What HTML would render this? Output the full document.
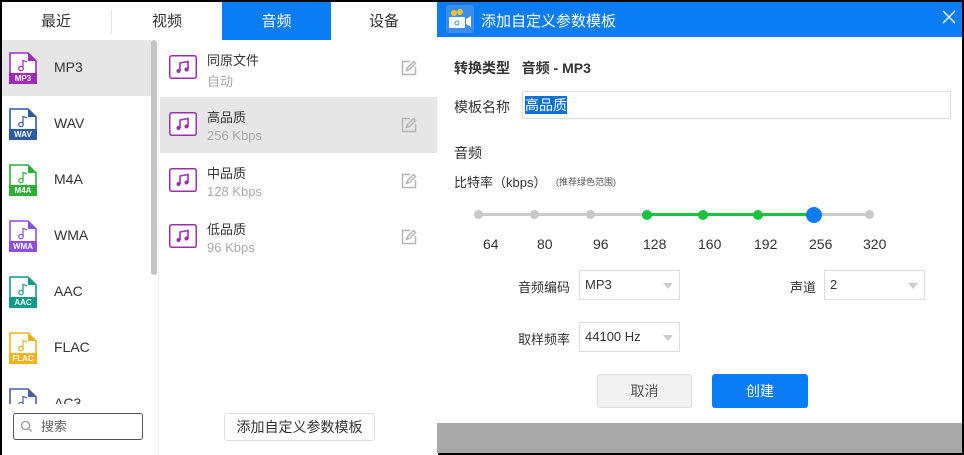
<!DOCTYPE html>
<html><head><meta charset="utf-8"><style>
*{margin:0;padding:0;box-sizing:border-box}
body{width:964px;height:455px;background:#000;position:relative;overflow:hidden;font-family:"Liberation Sans","Noto Sans CJK SC",sans-serif;color:#333}
.abs{position:absolute}
.tab{position:absolute;top:2px;height:38px;line-height:40px;text-align:center;font-size:15px;color:#333;background:#fff}
.fmt{position:absolute;left:2px;width:150px;height:56px}
.fmt .lbl{position:absolute;left:52px;top:19px;font-size:14px;color:#333}
.fmt .tg{position:absolute;left:7px;top:34px;font-size:8px;color:#fff;width:28px;text-align:center;font-weight:bold}
.fi{position:absolute;left:7px;top:12px;width:28px;height:32px}
.row{position:absolute;left:160px;width:277px;height:56px}
.row .t{position:absolute;left:47px;top:10px;font-size:13px;color:#333}
.row .s{position:absolute;left:47px;top:31px;font-size:13px;color:#aaa}
.row .n{position:absolute;left:9px;top:15px}
.row .e{position:absolute;left:241px;top:20px}
.sel{position:absolute;height:30px;border:1px solid #ddd;background:#fff;font-size:13px;line-height:28px;padding-left:5px;color:#333}
.sel:after{content:"";position:absolute;right:6px;top:12px;border:5px solid transparent;border-top:6px solid #ccc}
</style></head><body>
<div class="abs" style="left:2px;top:2px;width:436px;height:453px;background:#fff"></div>
<div class="tab" style="left:2px;width:108px">最近</div>
<div class="abs" style="left:111px;top:10px;width:1px;height:24px;background:#e5e5e5"></div>
<div class="tab" style="left:112px;width:110px">视频</div>
<div class="tab" style="left:222px;width:109px;background:#0a7cf6;color:#fff">音频</div>
<div class="tab" style="left:331px;width:106px">设备</div>

<svg width="0" height="0" style="position:absolute"><defs>
<symbol id="fi" viewBox="0 0 28 32"><path d="M1 1h18l8 8v22H1z" fill="#fff" stroke="currentColor" stroke-width="1.6"/><path d="M19 1l8 8h-8z" fill="currentColor"/><rect x="0" y="21" width="28" height="11" fill="currentColor"/><path d="M14 8v8.5" stroke="currentColor" stroke-width="1.2"/><circle cx="12" cy="16.5" r="2.2" fill="none" stroke="currentColor" stroke-width="1.2"/><path d="M14 8c1 1 3 1.5 4 2" fill="none" stroke="currentColor" stroke-width="1.2"/></symbol>
<symbol id="note" viewBox="0 0 28 24"><rect x="0.75" y="0.75" width="26.5" height="22.5" rx="2" fill="#fff" stroke="#9b2fae" stroke-width="1.5"/><path d="M11 16V8l8-1.5v8" fill="none" stroke="#9b2fae" stroke-width="1.6"/><circle cx="9.5" cy="16" r="2" fill="#9b2fae"/><circle cx="17.5" cy="14.5" r="2" fill="#9b2fae"/></symbol>
<symbol id="ed" viewBox="0 0 16 16"><path d="M9 1.5H1.5v13h13V7" fill="none" stroke="#b5b5b5" stroke-width="1.5"/><path d="M5.5 10.5l1-3 6-6 2 2-6 6z" fill="none" stroke="#b5b5b5" stroke-width="1.5"/></symbol>
</defs></svg>

<div class="fmt" style="top:40px;background:#e6e6e6"><svg class="fi" style="color:#a12bb8"><use href="#fi"/></svg><span class="tg">MP3</span><span class="lbl">MP3</span></div>
<div class="fmt" style="top:96px"><svg class="fi" style="color:#2e5aa0"><use href="#fi"/></svg><span class="tg">WAV</span><span class="lbl">WAV</span></div>
<div class="fmt" style="top:152px"><svg class="fi" style="color:#2fae3a"><use href="#fi"/></svg><span class="tg">M4A</span><span class="lbl">M4A</span></div>
<div class="fmt" style="top:208px"><svg class="fi" style="color:#8a4fe0"><use href="#fi"/></svg><span class="tg">WMA</span><span class="lbl">WMA</span></div>
<div class="fmt" style="top:264px"><svg class="fi" style="color:#12998a"><use href="#fi"/></svg><span class="tg">AAC</span><span class="lbl">AAC</span></div>
<div class="fmt" style="top:320px"><svg class="fi" style="color:#f2b21c"><use href="#fi"/></svg><span class="tg">FLAC</span><span class="lbl">FLAC</span></div>
<div class="fmt" style="top:376px;height:28px;overflow:hidden"><svg class="fi" style="color:#4a5fa8"><use href="#fi"/></svg><span class="lbl">AC3</span></div>
<div class="abs" style="left:2px;top:404px;width:156px;height:51px;background:#fff"></div>
<div class="abs" style="left:151px;top:40px;width:6px;height:235px;background:#c4c4c4;border-radius:3px"></div>
<div class="abs" style="left:158px;top:40px;width:1px;height:415px;background:#eee"></div>
<div class="abs" style="left:13px;top:413px;width:130px;height:27px;border:1px solid #555;border-radius:3px;font-size:13px;color:#666;line-height:25px;padding-left:27px">搜索</div>
<svg class="abs" style="left:20px;top:420px" width="13" height="13"><circle cx="5.5" cy="5.5" r="4" fill="none" stroke="#999" stroke-width="1.3"/><path d="M8.5 8.5l3 3" stroke="#999" stroke-width="1.3"/></svg>

<div class="row" style="top:40px"><svg class="n" width="28" height="24"><use href="#note"/></svg><span class="t">同原文件</span><span class="s">自动</span><svg class="e" width="16" height="16"><use href="#ed"/></svg></div>
<div class="row" style="top:97px;background:#e6e6e6"><svg class="n" width="28" height="24"><use href="#note"/></svg><span class="t">高品质</span><span class="s">256 Kbps</span><svg class="e" width="16" height="16"><use href="#ed"/></svg></div>
<div class="row" style="top:153px"><svg class="n" width="28" height="24"><use href="#note"/></svg><span class="t">中品质</span><span class="s">128 Kbps</span><svg class="e" width="16" height="16"><use href="#ed"/></svg></div>
<div class="row" style="top:209px"><svg class="n" width="28" height="24"><use href="#note"/></svg><span class="t">低品质</span><span class="s">96 Kbps</span><svg class="e" width="16" height="16"><use href="#ed"/></svg></div>
<div class="abs" style="left:224px;top:413px;width:151px;height:28px;border:1px solid #ddd;border-radius:3px;font-size:14px;line-height:26px;text-align:center;color:#333">添加自定义参数模板</div>

<!-- dialog -->
<div class="abs" style="left:437px;top:2px;width:525px;height:421px;background:#fff"></div>
<div class="abs" style="left:437px;top:423px;width:525px;height:30px;background:#a9a9a9"></div>
<div class="abs" style="left:437px;top:2px;width:525px;height:35px;background:#0a7cf6"></div>
<svg class="abs" style="left:446px;top:5px" width="28" height="28"><rect width="28" height="28" rx="3" fill="#3d8ee8"/><rect x="3" y="12" width="16" height="11" rx="1" fill="#fff"/><path d="M20 14l5-3v11l-5-3z" fill="#fff"/><circle cx="8" cy="8" r="3" fill="#f3c233"/><circle cx="14" cy="7" r="3" fill="#f3c233"/><circle cx="11" cy="18" r="2" fill="none" stroke="#3d8ee8"/></svg>
<span class="abs" style="left:481px;top:10px;font-size:15px;color:#fff">添加自定义参数模板</span>
<svg class="abs" style="left:942px;top:10px" width="14" height="14"><path d="M1 1l12 12M13 1L1 13" stroke="#fff" stroke-width="1.3"/></svg>

<span class="abs" style="left:454px;top:58px;font-size:14px;font-weight:bold;color:#333">转换类型&nbsp;&nbsp;&nbsp;音频 - MP3</span>
<span class="abs" style="left:454px;top:97px;font-size:14px;color:#333">模板名称</span>
<div class="abs" style="left:522px;top:91px;width:429px;height:28px;border:1px solid #ddd"></div>
<span class="abs" style="left:525px;top:96px;font-size:14px;color:#fff;background:#0a72d6;line-height:18px">高品质</span>
<span class="abs" style="left:454px;top:143px;font-size:14px;color:#333">音频</span>
<span class="abs" style="left:454px;top:172px;font-size:13px;color:#333">比特率（kbps）</span>
<span class="abs" style="left:556px;top:175px;font-size:9px;color:#555">(推荐绿色范围)</span>

<div class="abs" style="left:478px;top:213px;width:392px;height:3px;background:#ccc"></div>
<div class="abs" style="left:646px;top:213px;width:168px;height:3px;background:#18c23f"></div>
<div class="abs" style="left:474px;top:210px;width:9px;height:9px;border-radius:50%;background:#c8c8c8"></div>
<div class="abs" style="left:530px;top:210px;width:9px;height:9px;border-radius:50%;background:#c8c8c8"></div>
<div class="abs" style="left:586px;top:210px;width:9px;height:9px;border-radius:50%;background:#c8c8c8"></div>
<div class="abs" style="left:642px;top:210px;width:10px;height:10px;border-radius:50%;background:#18c23f"></div>
<div class="abs" style="left:698px;top:210px;width:10px;height:10px;border-radius:50%;background:#18c23f"></div>
<div class="abs" style="left:753px;top:210px;width:10px;height:10px;border-radius:50%;background:#18c23f"></div>
<div class="abs" style="left:806px;top:207px;width:16px;height:16px;border-radius:50%;background:#0a7cf6"></div>
<div class="abs" style="left:865px;top:210px;width:9px;height:9px;border-radius:50%;background:#c8c8c8"></div>
<div class="abs" style="left:475px;top:236px;font-size:14px;color:#333">
<span class="abs" style="left:8px">64</span><span class="abs" style="left:62px">80</span><span class="abs" style="left:118px">96</span><span class="abs" style="left:168px">128</span><span class="abs" style="left:223px">160</span><span class="abs" style="left:279px">192</span><span class="abs" style="left:334px">256</span><span class="abs" style="left:388px">320</span></div>

<span class="abs" style="left:518px;top:277px;font-size:13px;color:#333">音频编码</span>
<div class="sel" style="left:579px;top:270px;width:101px">MP3</div>
<span class="abs" style="left:790px;top:277px;font-size:13px;color:#333">声道</span>
<div class="sel" style="left:824px;top:270px;width:101px">2</div>
<span class="abs" style="left:518px;top:329px;font-size:13px;color:#333">取样频率</span>
<div class="sel" style="left:579px;top:322px;width:101px">44100 Hz</div>

<div class="abs" style="left:597px;top:374px;width:95px;height:34px;background:#f2f2f2;border:1px solid #ddd;border-radius:3px;font-size:14px;line-height:32px;text-align:center;color:#555">取消</div>
<div class="abs" style="left:712px;top:374px;width:96px;height:34px;background:#0a7cf6;border-radius:3px;font-size:14px;line-height:34px;text-align:center;color:#fff">创建</div>
</body></html>
